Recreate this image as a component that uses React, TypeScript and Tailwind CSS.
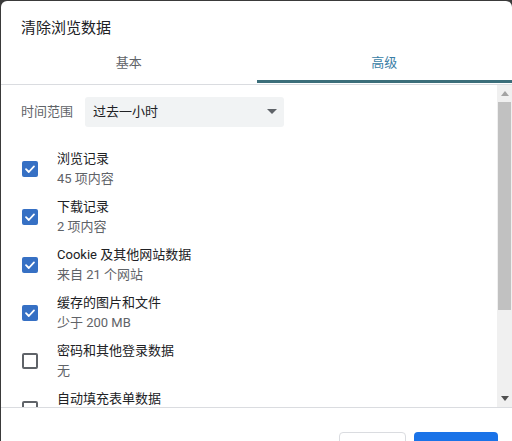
import React from "react";

const items = [
  { title: "浏览记录", sub: "45 项内容", checked: true },
  { title: "下载记录", sub: "2 项内容", checked: true },
  { title: "Cookie 及其他网站数据", sub: "来自 21 个网站", checked: true },
  { title: "缓存的图片和文件", sub: "少于 200 MB", checked: true },
  { title: "密码和其他登录数据", sub: "无", checked: false },
  { title: "自动填充表单数据", sub: "", checked: false },
];

function Checkbox({ checked }: { checked: boolean }) {
  if (checked) {
    return (
      <div className="w-[16px] h-[16px] rounded-[2px] bg-[#3670c4] flex items-center justify-center shrink-0">
        <svg width="12" height="12" viewBox="0 0 12 12">
          <path d="M2 6.2 L4.8 9 L10 3.4" fill="none" stroke="white" strokeWidth="1.8" strokeLinecap="round" strokeLinejoin="round" />
        </svg>
      </div>
    );
  }
  return <div className="w-[16px] h-[16px] rounded-[2px] border-2 border-[#5f6368] shrink-0" />;
}

export default function App() {
  return (
    <div
      className="w-[512px] h-[441px] bg-[#3a3a3a] overflow-hidden pl-[1px] pt-[1px]"
      style={{ fontFamily: 'Roboto, "Noto Sans CJK SC", sans-serif' }}
    >
      <div className="w-[511px] h-[470px] bg-white rounded-[6px] flex flex-col">
        <div className="h-[46px] pt-[17px] pl-[20px] text-[15px] leading-[20px] text-[#202124]">清除浏览数据</div>
        <div className="flex h-[38px] border-b border-[#dadce0]">
          <div className="flex-1 flex justify-center pt-[6px] text-[13px] leading-[20px] text-[#5f6368]">基本</div>
          <div className="flex-1 flex justify-center pt-[6px] text-[13px] leading-[20px] text-[#3a7ea6] relative">
            高级
            <div className="absolute left-0 right-0 bottom-[1px] h-[3px] bg-[#3b6e7a]" />
          </div>
        </div>
        <div className="flex h-[322px]">
          <div className="flex-1 overflow-hidden pt-[12px]">
            <div className="flex items-center pl-[20px]">
              <span className="text-[13px] leading-[20px] text-[#5f6368] w-[64px]">时间范围</span>
              <div className="w-[199px] h-[30px] bg-[#f1f3f4] rounded-[3px] flex items-center justify-between pl-[8px] pr-[7px]">
                <span className="text-[13px] leading-[20px] text-[#202124]">过去一小时</span>
                <svg width="10" height="6" viewBox="0 0 10 6">
                  <path d="M0 0 L10 0 L5 5 Z" fill="#5f6368" />
                </svg>
              </div>
            </div>
            <div className="mt-[18px] flex flex-col">
              {items.map((it) => (
                <div key={it.title} className="h-[48px] flex items-center pl-[21px] shrink-0">
                  <Checkbox checked={it.checked} />
                  <div className="ml-[19px] flex flex-col">
                    <span className="text-[13px] leading-[20px] text-[#202124]">{it.title}</span>
                    <span className="text-[13px] leading-[20px] text-[#5f6368] h-[20px]">{it.sub}</span>
                  </div>
                </div>
              ))}
            </div>
          </div>
          <div className="w-[15px] bg-[#f0f0f0] flex flex-col">
            <div className="h-[17px] flex items-center justify-center">
              <svg width="8" height="5" viewBox="0 0 8 5">
                <path d="M0 5 L8 5 L4 0 Z" fill="#a3a3a3" />
              </svg>
            </div>
            <div className="h-[208px] mx-[1px] bg-[#c1c1c1]" />
            <div className="flex-1" />
            <div className="h-[17px] flex items-center justify-center">
              <svg width="8" height="5" viewBox="0 0 8 5">
                <path d="M0 0 L8 0 L4 5 Z" fill="#505050" />
              </svg>
            </div>
          </div>
        </div>
        <div className="border-t border-[#dadce0] flex justify-end gap-[8px] pt-[24px] pr-[14px]">
          <button className="w-[67px] h-[32px] rounded-[4px] border border-[#dadce0] bg-white text-[13px] text-[#1a73e8]">取消</button>
          <button className="w-[84px] h-[32px] rounded-[4px] bg-[#1a73e8] text-[13px] text-white">清除数据</button>
        </div>
      </div>
    </div>
  );
}
